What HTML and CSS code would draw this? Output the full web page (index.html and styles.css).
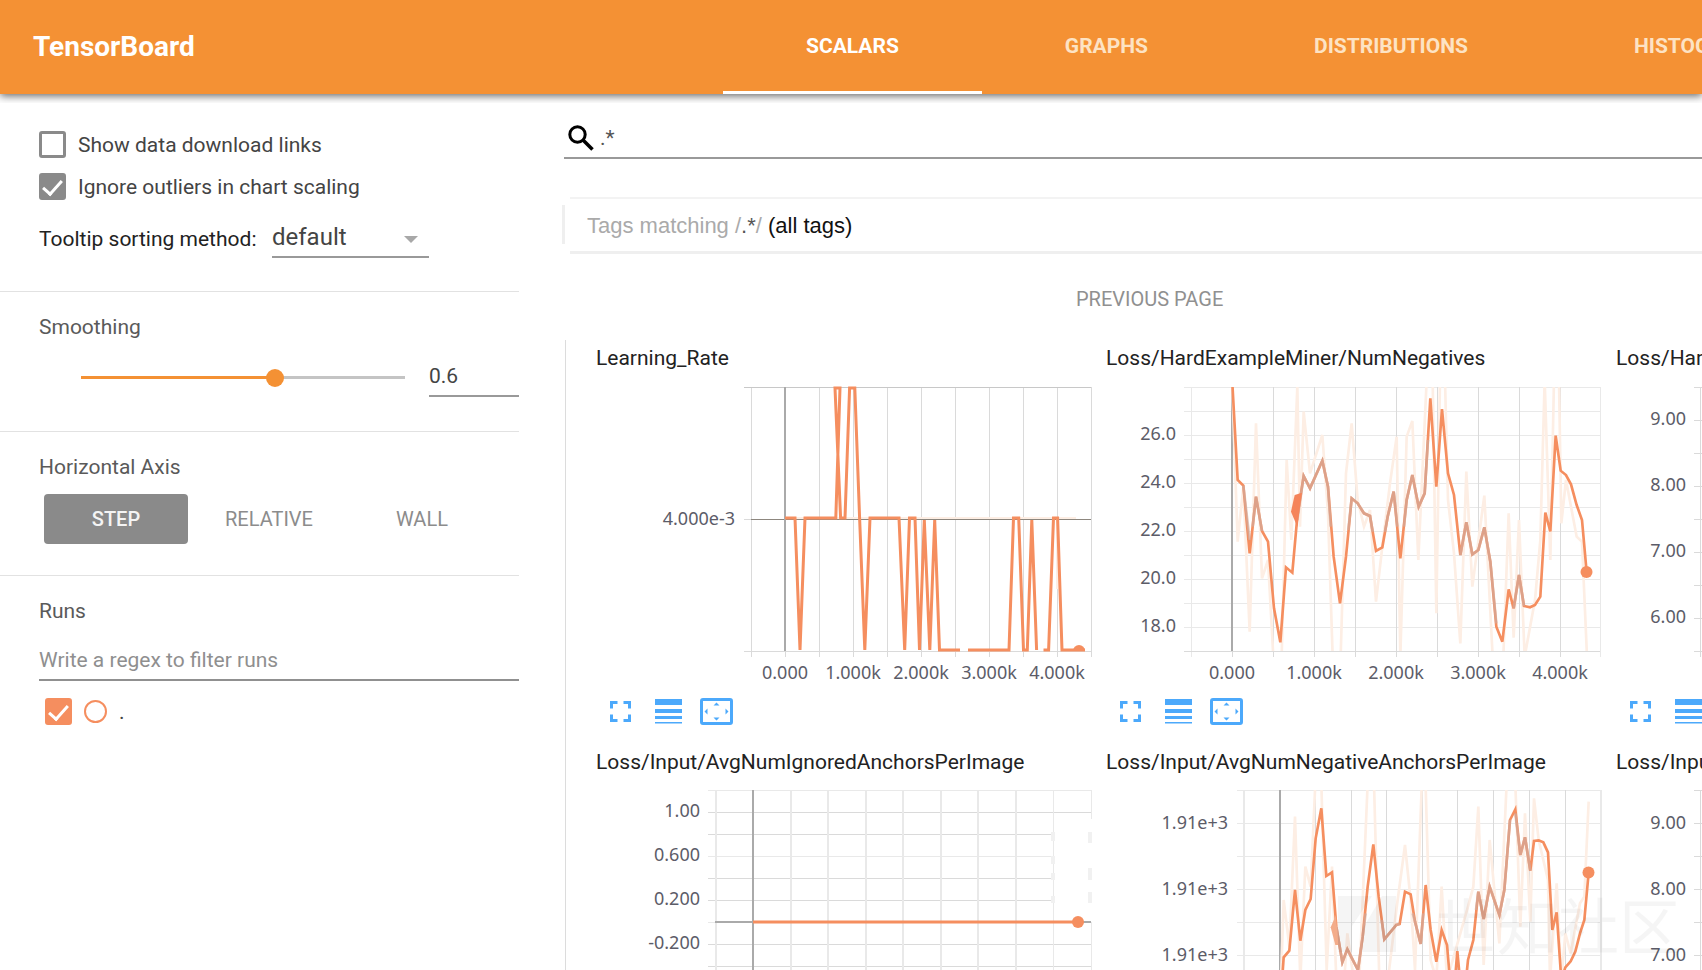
FILE: index.html
```html
<!DOCTYPE html>
<html lang="en">
<head>
<meta charset="utf-8">
<title>TensorBoard</title>
<link rel="stylesheet" href="styles.css">
</head>
<body>
<svg class="defs" aria-hidden="true">
  <symbol id="i-expand" viewBox="0 0 21 21"><path d="M1.500 7.500V1.500H7.500M13.500 1.500H19.500V7.500M19.500 13.500V19.500H13.500M7.500 19.500H1.500V13.500" fill="none" stroke="currentColor" stroke-width="3"/></symbol>
  <symbol id="i-lines" viewBox="0 0 27 25"><path d="M0 0H27V6H0zM0 10H27V14H0zM0 17H27V20H0zM0 23H27V24.500H0z" fill="currentColor"/></symbol>
  <symbol id="i-fit" viewBox="0 0 33 27"><rect x="1.500" y="1.500" width="30" height="24" rx="1.500" fill="none" stroke="currentColor" stroke-width="3"/><path d="M16.500 4.500L19.500 7.500H13.500zM16.500 22.500L19.500 19.500H13.500zM4.500 13.500L7.500 10.500V16.500zM28.500 13.500L25.500 10.500V16.500z" fill="currentColor"/></symbol>
</svg>

<header class="topbar">
  <h1 class="brand">TensorBoard</h1>
  <nav class="tabs">
    <a class="tab active" href="#scalars">SCALARS</a>
    <a class="tab" href="#graphs">GRAPHS</a>
    <a class="tab" href="#distributions">DISTRIBUTIONS</a>
    <a class="tab" href="#histograms">HISTOGRAMS</a>
  </nav>
</header>

<div class="layout">
  <aside class="sidebar">
    <section class="panel panel-options">
      <label class="check"><input type="checkbox"><span>Show data download links</span></label>
      <label class="check"><input type="checkbox" checked><span>Ignore outliers in chart scaling</span></label>
      <div class="sorting">
        <label for="sort">Tooltip sorting method:</label>
        <div class="select">
          <select id="sort"><option>default</option></select>
          <svg class="caret" viewBox="0 0 14 7"><path d="M0 0H14L7 7z" fill="#a8a8a8"/></svg>
        </div>
      </div>
    </section>
    <section class="panel">
      <h2><label for="smooth">Smoothing</label></h2>
      <div class="smoothing">
        <input id="smooth" class="slider" type="range" min="0" max="1" step="0.1" value="0.6">
        <input class="number" type="text" value="0.6" aria-label="Smoothing value">
      </div>
    </section>
    <section class="panel panel-axis">
      <h2>Horizontal Axis</h2>
      <div class="axis">
        <button class="mode selected" type="button">STEP</button>
        <button class="mode" type="button">RELATIVE</button>
        <button class="mode" type="button">WALL</button>
      </div>
    </section>
    <section class="panel panel-runs">
      <h2>Runs</h2>
      <input class="filter" type="text" placeholder="Write a regex to filter runs" aria-label="Filter runs">
      <label class="check run"><input type="checkbox" checked><i class="dot"></i><span>.</span></label>
    </section>
  </aside>

  <main class="content">
    <label class="search">
      <svg class="lens" viewBox="0 0 26 26"><circle cx="9.500" cy="9.500" r="7.700" fill="none" stroke="#000" stroke-width="3"/><path d="M15 15L24.500 24.500" stroke="#000" stroke-width="3.600"/></svg>
      <input type="text" value=".*" aria-label="Filter tags">
    </label>
    <div class="tags"><span>Tags matching /<b>.*</b>/ <em>(all tags)</em></span></div>
    <div class="pager"><button type="button">PREVIOUS PAGE</button></div>

    <div class="cards">
      <article class="card">
        <h3>Learning_Rate</h3>
        <svg class="chart" viewBox="0 0 504 304">
          <path class="grid" d="M155 8V278M189 8V278M223 8V278M257 8V278M291 8V278M325 8V278M359 8V278M393 8V278M427 8V278M461 8V278M495 8V278M148 272H495"/>
          <path class="grid strong" d="M148 8H495"/>
          <path class="zero thin" d="M155 140H495"/><path class="grid" d="M148 140H155"/>
          <path class="zero" d="M189 8V272"/>
          <path class="raw" d="M189 139H480M461 140V210"/>
          <g class="line">
            <path d="M189 139H199L204 271L209 139H239.800L244 9H239L244.600 139H249L253.600 9H258.800L263.600 139L268.800 271L274 139H303L308.700 271L313.500 139H319L323.500 271L328.300 141L333.800 271L338.700 141L343.500 271H364M372 271H413L417.500 139H422.700L427.500 271H431.300L435.800 141L440.600 271M447.500 271H452.600L457.500 139H461.600L466 271H489"/>
          </g>
          <path d="M477 272A6 6 0 0 1 489 272z" fill="#f58e5f"/>
          <g class="ylab"><text x="139" y="146">4.000e-3</text></g>
          <g class="xlab"><text x="189" y="300">0.000</text><text x="257" y="300">1.000k</text><text x="325" y="300">2.000k</text><text x="393" y="300">3.000k</text><text x="461" y="300">4.000k</text></g>
        </svg>
        <div class="tools"><button type="button" aria-label="Expand"><svg width="21" height="21"><use href="#i-expand"/></svg></button><button type="button" aria-label="Log scale"><svg width="27" height="25"><use href="#i-lines"/></svg></button><button type="button" aria-label="Fit domain"><svg width="33" height="27"><use href="#i-fit"/></svg></button></div>
      </article>

      <article class="card">
        <h3>Loss/HardExampleMiner/NumNegatives</h3>
        <svg class="chart" viewBox="0 0 504 304">
          <clipPath id="c2"><rect x="85" y="8" width="410" height="264"/></clipPath>
          <path class="grid light" d="M78 8H494M78 32H494M78 56H494M78 80H494M78 104H494M78 128H494M78 152H494M78 176H494M78 200H494M78 224H494M78 248H494M85 8V278M494 8V278"/>
          <path class="grid" d="M78 272H494M167 8V278M208 8V278M249 8V278M290 8V278M331 8V278M372 8V278M413 8V278M454 8V278M126 272V278"/>
          <path class="zero" d="M126 8V272"/>
          <g clip-path="url(#c2)"><g transform="translate(-16 -39) scale(.33333)">
            <polyline class="raw" points="427,140 443,605 460,440 479,875 498,250 516,715 534,660 550,950 575,950 590,360 604,600 622,140 630,560 641,215 660,400 697,285 714,520 728,950 752,950 768,400 785,250 803,480 822,560 840,510 858,785 877,620 900,430 920,290 931,950 950,290 967,243 985,660 1010,120 1028,120 1039,820 1050,120 1065,120 1074,480 1092,640 1111,910 1129,395 1147,740 1183,467 1208,950 1240,950 1256,520 1271,893 1287,540 1304,950 1335,780 1351,600 1364,120 1381,660 1392,120 1407,120 1414,550 1428,420 1460,590 1476,605 1491,950"/>
            <polyline class="main" points="427,130 443,420 460,437 479,640 498,470 516,573 534,605 552,805 571,907 588,682 607,698 622,530 641,408 660,445 697,362 714,440 731,650 750,790 768,650 785,475 803,490 822,520 840,528 858,633 877,622 893,530 911,455 931,655 950,480 967,405 986,500 1004,460 1021,175 1039,440 1056,207 1074,400 1092,465 1111,645 1129,547 1147,643 1165,630 1183,562 1201,665 1219,860 1237,905 1256,748 1271,805 1287,705 1302,798 1320,802 1335,795 1351,770 1366,518 1381,574 1397,287 1412,392 1428,405 1443,433 1460,495 1476,540 1490,697"/>
            <g class="muted">
              <polyline points="460,437 479,600"/><polyline points="488,560 498,470 516,573"/><polyline points="622,540 641,408 660,445 697,362 714,440 722,560"/><polyline points="775,570 785,475 803,490 822,520 840,528 848,575"/><polyline points="885,575 893,530 911,455 922,560"/><polyline points="942,560 950,480 967,405 986,500 1004,460 1014,300"/><polyline points="1111,645 1129,547 1147,643 1165,630 1183,562 1201,665 1219,850"/><polyline points="1271,805 1287,705 1302,798"/>
            </g>
            <path d="M603 515L614 465L636 458L622 560z" fill="#f5845a"/>
          </g></g>
          <circle cx="480.500" cy="193" r="6" fill="#f58e5f"/>
          <g class="ylab"><text x="70" y="61">26.0</text><text x="70" y="109">24.0</text><text x="70" y="157">22.0</text><text x="70" y="205">20.0</text><text x="70" y="253">18.0</text></g>
          <g class="xlab"><text x="126" y="300">0.000</text><text x="208" y="300">1.000k</text><text x="290" y="300">2.000k</text><text x="372" y="300">3.000k</text><text x="454" y="300">4.000k</text></g>
        </svg>
        <div class="tools"><button type="button" aria-label="Expand"><svg width="21" height="21"><use href="#i-expand"/></svg></button><button type="button" aria-label="Log scale"><svg width="27" height="25"><use href="#i-lines"/></svg></button><button type="button" aria-label="Fit domain"><svg width="33" height="27"><use href="#i-fit"/></svg></button></div>
      </article>

      <article class="card">
        <h3>Loss/HardExampleMiner/NumPositives</h3>
        <svg class="chart" viewBox="0 0 504 304">
          <path class="grid" d="M78 8H494M78 41H494M78 74H494M78 107H494M78 140H494M78 173H494M78 206H494M78 239H494M78 272H494M84 8V278"/>
          <g class="ylab"><text x="70" y="46">9.00</text><text x="70" y="112">8.00</text><text x="70" y="178">7.00</text><text x="70" y="244">6.00</text></g>
        </svg>
        <div class="tools"><button type="button" aria-label="Expand"><svg width="21" height="21"><use href="#i-expand"/></svg></button><button type="button" aria-label="Log scale"><svg width="27" height="25"><use href="#i-lines"/></svg></button></div>
      </article>

      <article class="card">
        <h3>Loss/Input/AvgNumIgnoredAnchorsPerImage</h3>
        <svg class="chart" viewBox="0 0 504 304">
          <path class="grid light" d="M112 7H119M119 7H495M112 73H457"/>
          <path class="grid" d="M112 29H495M112 51H455M112 95H455M112 117H457M112 161H495M112 183H495M112 205H495"/>
          <path class="grid light wide" d="M119.500 7V250M194.500 7V250M232 7V250M269.500 7V250M307 7V250M344.500 7V250M382 7V250M419.500 7V250"/>
          <path class="grid light" d="M457 7V250M495 7V36M495 139V250"/>
          <path class="faded" d="M457 49V58M457 73V81M457 90V97M457 113V120M494 49V60M494 85V97M494 109V120"/>
          <path class="grid light" d="M112 139H119"/>
          <path class="zero wide" d="M119 139H495M157 7V250"/>
          <g class="line"><path d="M157 139H482"/></g>
          <circle cx="482" cy="139" r="6" fill="#f58e5f"/>
          <g class="ylab"><text x="104" y="34">1.00</text><text x="104" y="78">0.600</text><text x="104" y="122">0.200</text><text x="104" y="166">-0.200</text></g>
        </svg>
      </article>

      <article class="card">
        <h3>Loss/Input/AvgNumNegativeAnchorsPerImage</h3>
        <svg class="chart" viewBox="0 0 504 304">
          <clipPath id="c5"><rect x="138" y="7" width="357" height="264"/></clipPath>
          <path class="grid light" d="M131 7H495M131 40H495M131 73H495M131 106H495M131 139H495M131 172H495"/>
          <path class="grid light wide" d="M138 7V250M495 7V250"/>
          <path class="grid" d="M209 7V250M245 7V250M280 7V250M316 7V250M351 7V250M387 7V250M423 7V250M459 7V250"/>
          <path class="zero" d="M173.500 7V250"/>
          <g clip-path="url(#c5)"><g transform="translate(-6 -103) scale(.33333)">
            <polyline class="raw" points="540,990 551,660 568,800 585,410 601,900 616,560 632,620 646,310 664,310 680,870 696,560 709,900 727,990 742,760 774,990 803,310 822,310 838,900 853,990 889,690 915,495 932,660 945,870 965,320 977,320 992,840 1009,900 1025,620 1041,900 1104,680 1120,620 1135,380 1151,855 1169,480 1198,790 1220,310 1246,310 1261,740 1275,400 1291,725 1302,355 1316,480 1344,600 1350,900 1370,610 1384,900 1396,760 1412,820 1440,670 1453,650 1466,365"/>
            <polyline class="main" points="540,990 551,832 568,812 585,630 601,782 616,690 632,657 647,475 664,385 679,588 696,577 709,740 727,847 742,808 774,870 788,770 803,620 820,493 836,650 853,778 889,735 899,732 915,635 932,643 945,725 962,792 977,615 992,750 1009,845 1025,750 1041,795 1050,900 1065,900 1072,813 1080,900 1098,900 1104,840 1120,780 1135,635 1151,717 1169,620 1198,705 1213,630 1230,420 1246,388 1261,525 1275,472 1291,572 1302,483 1316,481 1330,487 1344,517 1357,750 1370,697 1384,900 1396,862 1412,844 1426,815 1440,760 1453,720 1466,578"/>
            <g class="muted">
              <polyline points="709,740 727,847 742,808 774,870 788,770 797,700"/><polyline points="845,720 853,778 889,735 899,732"/><polyline points="938,700 945,725 962,792 970,700"/><polyline points="1128,690 1135,635 1151,717 1169,620 1198,705 1213,630 1230,420"/><polyline points="1246,400 1261,525 1275,472 1291,572"/>
            </g>
            <path d="M692 742L708 705L715 795L706 795z" fill="#f3ac8a"/>
          </g></g>
          <circle cx="482.500" cy="89.500" r="6" fill="#f58e5f"/>
          <g class="ylab"><text x="122" y="46">1.91e+3</text><text x="122" y="112">1.91e+3</text><text x="122" y="178">1.91e+3</text></g>
        </svg>
      </article>

      <article class="card">
        <h3>Loss/Input/AvgNumPositiveAnchorsPerImage</h3>
        <svg class="chart" viewBox="0 0 504 304">
          <path class="grid" d="M78 7H494M78 40H494M78 73H494M78 106H494M78 139H494M78 172H494M84 7V278"/>
          <g class="ylab"><text x="70" y="46">9.00</text><text x="70" y="112">8.00</text><text x="70" y="178">7.00</text></g>
        </svg>
      </article>
    </div>
  </main>
  <div class="watermark" aria-hidden="true"><svg viewBox="0 0 60 56"><path d="M0 0H34L14 30V56H0zM44 0H58V56H24V34z" fill="#000"/></svg><span>世知社区</span></div>
</div>
</body>
</html>
```
FILE: styles.css
```css
* { box-sizing: border-box; }
body {
  margin: 0;
  height: 100vh;
  overflow: hidden;
  display: flex;
  flex-direction: column;
  background: #fff;
  color: #444;
  font: 21px/26px Roboto, sans-serif;
}
h1, h2, h3 { margin: 0; font: inherit; }
button, input, select { font: inherit; color: inherit; border: 0; padding: 0; margin: 0; background: none; border-radius: 0; outline: 0; }
.defs { position: absolute; width: 0; height: 0; }

.topbar {
  flex: none;
  position: relative;
  display: flex;
  height: 94px;
  background: #f49134;
  box-shadow: 0 2px 8px rgba(0, 0, 0, .6);
  clip-path: inset(0 0 -9px 0);
}
.brand { flex: none; width: 723px; padding-left: 33px; line-height: 93px; font-size: 28px; font-weight: 700; color: #fff; }
.tabs { display: flex; min-width: 0; overflow: hidden; }
.tab { flex: none; padding: 0 83px; line-height: 92px; font-size: 21px; font-weight: 700; color: #fde3c4; text-decoration: none; white-space: nowrap; }
.tab.active { color: #fff; border-bottom: 3px solid #fff; }

.layout { flex: 1; display: flex; min-height: 0; position: relative; overflow: hidden; z-index: -1; }
.sidebar { flex: none; width: 519px; }
.panel { padding: 22px 0 33px 39px; border-bottom: 1px solid #e2e2e2; }
.panel h2 { color: #5a5a5a; }
.panel-options { padding-top: 37px; }
.panel-axis { padding-bottom: 31px; }
.panel-runs { border: 0; }

.check { display: flex; align-items: center; gap: 12px; height: 27px; margin-bottom: 15px; }
.check input {
  appearance: none;
  width: 27px;
  height: 27px;
  border: 3px solid #8a8a8a;
  border-radius: 3px;
  display: grid;
  place-items: center;
}
.check input:checked { background: #8a8a8a; }
.check input:checked::after { content: ""; width: 8px; height: 16px; margin-bottom: 5px; border: solid #fff; border-width: 0 3px 3px 0; rotate: 42deg; }
.sorting { display: flex; align-items: center; height: 43px; color: #222; }
.sorting label { width: 233px; padding-top: 5px; }
.select { position: relative; width: 157px; border-bottom: 2px solid #999; }
.select select { appearance: none; width: 100%; height: 41px; padding-top: 2px; font-size: 24px; color: #444; }
.caret { position: absolute; right: 11px; top: 21px; width: 14px; height: 7px; pointer-events: none; }

.smoothing { display: flex; justify-content: flex-end; gap: 15px; height: 41px; margin-top: 17px; }
.slider { appearance: none; width: 342px; height: 41px; }
.slider::-webkit-slider-runnable-track { height: 18px; background: linear-gradient(90deg, #f49134 60%, #c4c4c4 60%) center / calc(100% - 18px) 3px no-repeat; }
.slider::-webkit-slider-thumb { appearance: none; width: 18px; height: 18px; border-radius: 50%; background: #f49134; }
.number { width: 90px; height: 40px; border-bottom: 2px solid #999; color: #444; }

.axis { display: flex; gap: 9px; margin: 14px 0 0 5px; }
.mode { width: 144px; height: 50px; border-radius: 4px; font-size: 20px; color: #8c8c8c; }
.mode.selected { background: #8a8a8a; color: #f4f4f4; font-weight: 500; }

.filter { width: 100%; height: 39px; margin-top: 18px; border-bottom: 2px solid #909090; padding-bottom: 2px; }
.filter::placeholder { color: #8f8f8f; opacity: 1; }
.check.run { margin: 17px 0 0 6px; }
.check.run input { border-color: #f58e5f; }
.check.run input:checked { background: #f58e5f; }
.dot { width: 23px; height: 23px; border: 2px solid #f58e5f; border-radius: 50%; }

.content { flex: 1; min-width: 0; padding-left: 43px; }
.search { display: flex; align-items: center; gap: 6px; height: 47px; margin: 18px 0 0 2px; padding: 6px 0 0 4px; border-bottom: 2px solid #999; }
.lens { width: 26px; height: 26px; }
.search input { flex: 1; color: #555; }
.tags {
  position: relative;
  display: flex;
  align-items: center;
  height: 57px;
  margin: 38px 0 0 8px;
  padding: 2px 0 0 17px;
  border-top: 2px solid #f3f3f3;
  border-bottom: 3px solid #efefef;
  font-family: "Liberation Sans", sans-serif;
  font-size: 22px;
  color: #aaa;
}
.tags::before { content: ""; position: absolute; left: -8px; top: 6px; bottom: 7px; width: 3px; background: #efefef; }
.tags b { font-weight: 400; color: #555; }
.tags em { font-style: normal; color: #111; }
.pager { display: flex; align-items: center; height: 86px; padding: 3px 0 0 514px; }
.pager button { font-size: 20px; color: #909090; }

.cards { display: grid; grid-template-columns: repeat(3, 510px); row-gap: 24px; margin-left: 3px; padding: 5px 0 0 30px; border-left: 1px solid #dcdcdc; }
.card h3 { color: #222; white-space: nowrap; }
.chart { display: block; width: 504px; height: 304px; margin: 8px 0 14px; overflow: visible; font: 18px "Noto Sans", sans-serif; fill: #5c5c68; }
.tools { display: flex; height: 28px; }
.tools button { display: grid; place-items: center; width: 48px; color: #4ca9fb; }

.chart path { stroke-width: 1; }
.grid { fill: none; stroke: #dadada; shape-rendering: crispEdges; }
.grid.light { stroke: #e9e9e9; }
.grid.strong { stroke: #c8c8c8; }
.zero { fill: none; stroke: #aaa; shape-rendering: crispEdges; }
.chart .zero { stroke-width: 2; }
.chart .zero.thin { stroke: #8d877f; stroke-width: 1; }
.chart .wide { stroke-width: 2; }
.chart .faded { stroke: #f1f1f1; stroke-width: 4; }
.raw { fill: none; stroke: #fdeee4; stroke-width: 8; }
.chart path.raw { stroke-width: 2; }
.main { fill: none; stroke: #f58e5f; stroke-width: 8; }
.chart .line path { fill: none; stroke: #f58e5f; stroke-width: 3; }
.muted { fill: none; stroke: #d0aca0; stroke-opacity: .65; stroke-width: 8; }
.ylab { text-anchor: end; }
.xlab { text-anchor: middle; }

.watermark { position: absolute; right: 22px; bottom: 14px; display: flex; align-items: center; gap: 38px; opacity: .035; font: 61px/64px "Noto Sans CJK SC", sans-serif; color: #000; pointer-events: none; }
.watermark svg { width: 60px; height: 56px; }
```
